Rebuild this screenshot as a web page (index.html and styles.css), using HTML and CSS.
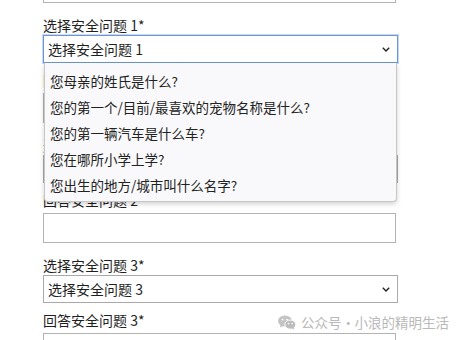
FILE: index.html
```html
<!DOCTYPE html>
<html lang="zh-CN">
<head>
  <meta charset="UTF-8" />
  <title>安全问题</title>
  <link rel="stylesheet" href="styles.css">
</head>
<body>
  <div class="form">
    <!-- 上一个输入框 (只露出底边) -->
    <div class="field answer-field">
      <input class="text-input" type="text" />
    </div>

    <!-- 安全问题 1 (下拉展开) -->
    <div class="field select-field">
      <label class="label">选择安全问题 1*</label>
      <div class="select-wrap">
        <div class="select is-open">
          <span>选择安全问题 1</span>
          <svg class="chevron" width="8" height="5" viewBox="0 0 8 5"><path d="M0.8 0.8 L4 4 L7.2 0.8" fill="none" stroke="#222" stroke-width="1.4"/></svg>
        </div>
        <ul class="dropdown">
          <li>您母亲的姓氏是什么?</li>
          <li>您的第一个/目前/最喜欢的宠物名称是什么?</li>
          <li>您的第一辆汽车是什么车?</li>
          <li>您在哪所小学上学?</li>
          <li>您出生的地方/城市叫什么名字?</li>
        </ul>
      </div>
    </div>

    <div class="field answer-field">
      <label class="label">回答安全问题 1*</label>
      <input class="text-input" type="text" />
    </div>

    <div class="field select-field">
      <label class="label">选择安全问题 2*</label>
      <div class="select">
        <span>选择安全问题 2</span>
        <svg class="chevron" width="8" height="5" viewBox="0 0 8 5"><path d="M0.8 0.8 L4 4 L7.2 0.8" fill="none" stroke="#222" stroke-width="1.4"/></svg>
      </div>
    </div>

    <div class="field answer-field">
      <label class="label">回答安全问题 2*</label>
      <input class="text-input" type="text" />
    </div>

    <div class="field select-field">
      <label class="label">选择安全问题 3*</label>
      <div class="select">
        <span>选择安全问题 3</span>
        <svg class="chevron" width="8" height="5" viewBox="0 0 8 5"><path d="M0.8 0.8 L4 4 L7.2 0.8" fill="none" stroke="#222" stroke-width="1.4"/></svg>
      </div>
    </div>

    <div class="field answer-field">
      <label class="label">回答安全问题 3*</label>
      <input class="text-input" type="text" />
    </div>
  </div>

  <!-- 公众号水印 -->
  <div class="watermark">
    <svg class="wechat" width="18" height="15" viewBox="0 0 18 15">
      <ellipse cx="7" cy="6" rx="7" ry="5.6" fill="#c4c4c4"/>
      <path d="M2.5 9.5 L2 12.5 L5.5 10.8 Z" fill="#c4c4c4"/>
      <circle cx="4.6" cy="4.6" r="0.9" fill="#fff"/>
      <circle cx="9" cy="4.6" r="0.9" fill="#fff"/>
      <ellipse cx="12.3" cy="9.6" rx="5.5" ry="4.6" fill="#bdbdbd" stroke="#fff" stroke-width="1"/>
      <path d="M15.5 12.5 L16.5 14.6 L13.8 13.6 Z" fill="#bdbdbd"/>
      <circle cx="10.5" cy="8.6" r="0.8" fill="#fff"/>
      <circle cx="14.1" cy="8.6" r="0.8" fill="#fff"/>
    </svg>
    <span class="wm-text">公众号<span class="dot">·</span>小浪的精明生活</span>
  </div>
</body>
</html>
```

FILE: styles.css
```css
body {
  margin: 0;
  background-color: #fff;
  font-family: "Noto Sans CJK SC", "Noto Sans", sans-serif;
  color: #1f1f1f;
  overflow: hidden;
}

/* 表单列 */
.form {
  margin-top: -27px;
  padding-left: 43px;
}

.label {
  display: block;
  font-size: 14px;
  line-height: 20px;
  color: #1f1f1f;
}

/* 下拉选择字段 */
.select-field {
  margin-bottom: 7px;
}

.select-wrap {
  position: relative;
  width: 355px;
}

.select {
  box-sizing: border-box;
  width: 355px;
  height: 28px;
  padding: 0 7px 0 4px;
  border: 1px solid #a9a9a9;
  background-color: #fff;
  display: flex;
  align-items: center;
  justify-content: space-between;
  font-size: 14px;
  color: #1f1f1f;
}

.select.is-open {
  border-color: #6b97d2;
  outline: 1px solid #c7d8f0;
}

.chevron {
  display: block;
}

/* 展开的选项列表 */
.dropdown {
  position: absolute;
  top: 100%;
  left: 1px;
  z-index: 10;
  box-sizing: border-box;
  width: 353px;
  margin: 0;
  padding: 5px 0 3px;
  list-style: none;
  background-color: #f9f9fb;
  border: 1px solid #c6c6c6;
  border-top: none;
  border-radius: 0 0 4px 4px;
  box-shadow: 0 2px 5px rgba(0, 0, 0, 0.18);
}

.dropdown li {
  height: 26px;
  line-height: 26px;
  padding-left: 5px;
  font-size: 13.5px;
  color: #222;
}

/* 回答输入字段 */
.answer-field {
  margin-bottom: 12px;
}

.answer-field .label {
  margin-bottom: 3px;
}

.text-input {
  display: block;
  box-sizing: border-box;
  width: 353px;
  height: 30px;
  margin: 0;
  border: 1px solid #b3b3b3;
  border-radius: 0;
  background-color: #fff;
  outline: none;
}

/* 水印 */
.watermark {
  position: absolute;
  left: 278px;
  top: 312px;
  height: 20px;
  display: flex;
  align-items: center;
  gap: 5px;
  font-size: 13.5px;
  color: #b9b9b9;
  white-space: nowrap;
}

.dot {
  display: inline-block;
  width: 13px;
  text-align: center;
}

.wechat {
  display: block;
}
```
